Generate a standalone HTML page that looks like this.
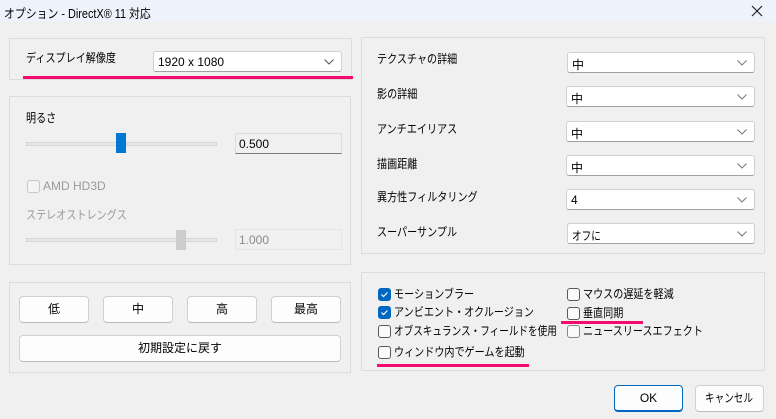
<!DOCTYPE html>
<html><head><meta charset="utf-8"><style>
*{box-sizing:border-box;margin:0;padding:0}
body{width:776px;height:419px;background:#f0f0f0;position:relative;overflow:hidden;font-family:"Liberation Sans","Noto Sans CJK JP",sans-serif;font-size:12px;color:#000}
.a{position:absolute}
.title{left:0;top:0;width:776px;height:22px;background:#eef2fa}
.panel{position:absolute;border:1px solid #dcdcdc}
.combo{position:absolute;background:#fff;border:1px solid #d0d0d0;border-bottom:1px solid #a0a0a0;border-radius:3px;height:21px;padding:3px 4px;font-size:12px}
.combo svg{position:absolute;right:7px;top:7px}
.btn{position:absolute;background:#fdfdfd;border:1px solid #d0d0d0;border-bottom-color:#bcbcbc;border-radius:4px;height:27px;text-align:center;line-height:25px;font-size:12px}
.cb{position:absolute;width:13px;height:13px;border:1px solid #5a5a5a;border-radius:3px;background:#fafafa}
.cb.on{background:#0067c0;border-color:#0067c0}
.lbl{position:absolute;font-size:12px;white-space:nowrap;transform:scaleX(0.84);transform-origin:0 0}
.pink{position:absolute;height:3px;background:#f50a6e}
</style></head><body>
<div class="a title"></div>
<div class="lbl" style="left:4px;top:3px;font-size:12.5px;transform:scaleX(0.87)">オプション - DirectX® 11 対応</div>
<svg class="a" style="left:751px;top:5px" width="12" height="12"><path d="M1 1L11 11M11 1L1 11" stroke="#222" stroke-width="1.2"/></svg>

<div class="panel" style="left:9px;top:38px;width:343px;height:42px"></div>
<div class="lbl" style="left:26px;top:49px">ディスプレイ解像度</div>
<div class="combo" style="left:153px;top:51px;width:189px">1920 x 1080<svg width="10" height="6"><path d="M0.5 0.5L5 5L9.5 0.5" stroke="#555" fill="none"/></svg></div>
<div class="pink" style="left:23px;top:76px;width:330px"></div>

<div class="panel" style="left:9px;top:96px;width:342px;height:169px"></div>
<div class="lbl" style="left:26px;top:109px">明るさ</div>
<div class="a" style="left:26px;top:142px;width:191px;height:4px;background:#e6e6e6;border:1px solid #d6d6d6"></div>
<div class="a" style="left:116px;top:133px;width:10px;height:20px;background:#0078d4"></div>
<div class="a" style="left:235px;top:133px;width:107px;height:21px;background:#f0f0f0;border:1px solid #dcdcdc;border-bottom:1px solid #7a7a7a;padding:3px 3px">0.500</div>
<div class="cb" style="left:27px;top:180px;border-color:#c8c8c8;background:#f4f4f4"></div>
<div class="lbl" style="left:43px;top:179px;color:#9a9a9a;transform:none">AMD HD3D</div>
<div class="lbl" style="left:26px;top:206px;color:#9a9a9a">ステレオストレングス</div>
<div class="a" style="left:26px;top:238px;width:191px;height:4px;background:#e6e6e6;border:1px solid #d6d6d6"></div>
<div class="a" style="left:176px;top:230px;width:10px;height:20px;background:#cccccc"></div>
<div class="a" style="left:235px;top:229px;width:107px;height:21px;background:#f0f0f0;border:1px solid #e4e4e4;padding:3px 3px;color:#8a8a8a">1.000</div>

<div class="panel" style="left:9px;top:282px;width:342px;height:91px"></div>
<div class="btn" style="left:19px;top:296px;width:70px">低</div>
<div class="btn" style="left:103px;top:296px;width:70px">中</div>
<div class="btn" style="left:187px;top:296px;width:70px">高</div>
<div class="btn" style="left:271px;top:296px;width:70px">最高</div>
<div class="btn" style="left:19px;top:335px;width:322px">初期設定に戻す</div>

<div class="panel" style="left:361px;top:37px;width:404px;height:217px"></div>
<div class="lbl" style="left:377px;top:50px">テクスチャの詳細</div>
<div class="combo" style="left:567px;top:52px;width:188px">中<svg width="10" height="6"><path d="M0.5 0.5L5 5L9.5 0.5" stroke="#777" fill="none"/></svg></div>
<div class="lbl" style="left:377px;top:85px">影の詳細</div>
<div class="combo" style="left:566px;top:86px;width:189px">中<svg width="10" height="6"><path d="M0.5 0.5L5 5L9.5 0.5" stroke="#777" fill="none"/></svg></div>
<div class="lbl" style="left:377px;top:120px">アンチエイリアス</div>
<div class="combo" style="left:566px;top:121px;width:189px">中<svg width="10" height="6"><path d="M0.5 0.5L5 5L9.5 0.5" stroke="#777" fill="none"/></svg></div>
<div class="lbl" style="left:377px;top:155px">描画距離</div>
<div class="combo" style="left:566px;top:155px;width:189px">中<svg width="10" height="6"><path d="M0.5 0.5L5 5L9.5 0.5" stroke="#777" fill="none"/></svg></div>
<div class="lbl" style="left:377px;top:188px">異方性フィルタリング</div>
<div class="combo" style="left:566px;top:189px;width:189px">4<svg width="10" height="6"><path d="M0.5 0.5L5 5L9.5 0.5" stroke="#777" fill="none"/></svg></div>
<div class="lbl" style="left:377px;top:223px">スーパーサンプル</div>
<div class="combo" style="left:567px;top:223px;width:188px"><span style="display:inline-block;transform:scaleX(0.8);transform-origin:0 0">オフに</span><svg width="10" height="6"><path d="M0.5 0.5L5 5L9.5 0.5" stroke="#777" fill="none"/></svg></div>

<div class="panel" style="left:361px;top:272px;width:404px;height:99px"></div>
<div class="cb on" style="left:378px;top:288px"><svg width="11" height="11" style="position:absolute;left:0;top:0"><path d="M2.5 5.5L4.5 7.5L8.5 3.5" stroke="#fff" stroke-width="1.2" fill="none"/></svg></div>
<div class="lbl" style="left:394px;top:285px">モーションブラー</div>
<div class="cb on" style="left:378px;top:306px"><svg width="11" height="11" style="position:absolute;left:0;top:0"><path d="M2.5 5.5L4.5 7.5L8.5 3.5" stroke="#fff" stroke-width="1.2" fill="none"/></svg></div>
<div class="lbl" style="left:394px;top:303px">アンビエント・オクルージョン</div>
<div class="cb" style="left:378px;top:325px"></div>
<div class="lbl" style="left:394px;top:322px;transform:scaleX(0.8)">オブスキュランス・フィールドを使用</div>
<div class="cb" style="left:378px;top:346px"></div>
<div class="lbl" style="left:394px;top:343px">ウィンドウ内でゲームを起動</div>
<div class="pink" style="left:377px;top:364px;width:152px"></div>
<div class="cb" style="left:567px;top:288px"></div>
<div class="lbl" style="left:583px;top:285px">マウスの遅延を軽減</div>
<div class="cb" style="left:567px;top:307px"></div>
<div class="lbl" style="left:583px;top:304px">垂直同期</div>
<div class="pink" style="left:561px;top:321px;width:82px"></div>
<div class="cb" style="left:567px;top:325px;border-color:#888"></div>
<div class="lbl" style="left:583px;top:322px">ニュースリースエフェクト</div>

<div class="btn" style="left:614px;top:385px;width:69px;border:1px solid #0067c0;border-bottom:2px solid #0067c0">OK</div>
<div class="btn" style="left:695px;top:385px;width:69px"><span style="display:inline-block;transform:scaleX(0.8)">キャンセル</span></div>
</body></html>
